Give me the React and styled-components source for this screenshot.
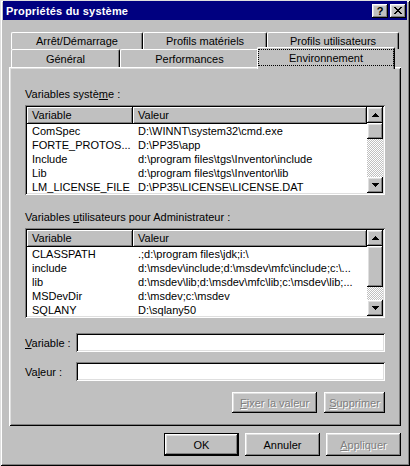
import React from 'react';
import styled, { createGlobalStyle, css } from 'styled-components';

const GlobalStyle = createGlobalStyle`
  * { box-sizing: border-box; }
  html, body { margin: 0; padding: 0; background: #c0c0c0; }
  body {
    font-family: "Liberation Sans", Arial, sans-serif;
    font-size: 11px;
    color: #000;
  }
`;

// classic 3D bevels
const raised = css`
  box-shadow: inset -1px -1px #000, inset 1px 1px #fff, inset -2px -2px #808080, inset 2px 2px #dfdfdf;
`;

const sunken = css`
  box-shadow: inset 1px 1px #808080, inset -1px -1px #fff, inset 2px 2px #000, inset -2px -2px #dfdfdf;
`;

const Window = styled.div`
  width: 410px;
  height: 466px;
  background: #c0c0c0;
  padding: 1px 3px 3px;
  display: flex;
  flex-direction: column;
  box-shadow: inset 1px 1px #dfdfdf, inset -1px -1px #000, inset 2px 2px #fff, inset -2px -2px #808080;
`;

const TitleBar = styled.div`
  height: 19px;
  flex-shrink: 0;
  background: #000080;
  color: #fff;
  display: flex;
  align-items: center;
  padding: 0 1px 0 3px;
`;

const TitleText = styled.div`
  flex: 1;
  font-weight: bold;
  font-size: 11px;
  letter-spacing: 0.2px;
`;

const CaptionButtons = styled.div`
  display: flex;
  gap: 2px;
`;

const CaptionButton = styled.div`
  width: 16px;
  height: 14px;
  background: #c0c0c0;
  color: #000;
  font-weight: bold;
  font-size: 11px;
  line-height: 14px;
  display: flex;
  align-items: center;
  justify-content: center;
  ${raised}
`;

const Body = styled.div`
  flex: 1;
  padding: 12px 6px 0;
  display: flex;
  flex-direction: column;
`;

const TabStrip = styled.div`
  display: flex;
  flex-direction: column;
  padding-left: 2px;
`;

const TabRow = styled.div`
  display: flex;
  align-items: flex-end;
  height: ${p => p.h}px;
`;

const Tab = styled.div`
  width: ${p => p.w}px;
  height: 100%;
  background: #c0c0c0;
  border-top: 1px solid #fff;
  border-left: 1px solid #fff;
  border-right: 1px solid #000;
  border-radius: 2px 2px 0 0;
  box-shadow: inset -1px 0 #808080;
  display: flex;
  align-items: center;
  justify-content: center;
  white-space: nowrap;

  ${p => p.active && css`
    height: 22px;
    margin: 0 -2px -2px;
    padding: 1px 0 3px;
    position: relative;
    z-index: 1;
  `}
`;

const Focus = styled.div`
  flex: 1;
  height: 100%;
  border: 1px dotted #000;
  display: flex;
  align-items: center;
  justify-content: center;
`;

const Panel = styled.div`
  height: 359px;
  flex-shrink: 0;
  padding: 21px 16px 0;
  display: flex;
  flex-direction: column;
  box-shadow: inset 1px 1px #fff, inset -1px -1px #000, inset 2px 2px #dfdfdf, inset -2px -2px #808080;
`;

const GroupLabel = styled.div`
  line-height: 13px;
  height: 13px;
  margin-top: ${p => p.top || 0}px;
  margin-bottom: 4px;
`;

const Key = styled.span`
  text-decoration: underline;
`;

const ListView = styled.div`
  height: 90px;
  flex-shrink: 0;
  background: #fff;
  padding: 2px;
  display: flex;
  overflow: hidden;
  ${sunken}
`;

const ListBody = styled.div`
  flex: 1;
  min-width: 0;
  display: flex;
  flex-direction: column;
  overflow: hidden;
`;

const HeaderRow = styled.div`
  display: flex;
  height: 17px;
  flex-shrink: 0;
`;

const HeaderCell = styled.div`
  ${p => (p.w ? `width: ${p.w}px;` : 'flex: 1;')}
  background: #c0c0c0;
  line-height: 16px;
  padding-left: 5px;
  box-shadow: inset -1px -1px #000, inset 1px 1px #fff, inset -2px -2px #808080;
`;

const Row = styled.div`
  display: flex;
  height: 14px;
  line-height: 14px;
  flex-shrink: 0;
  white-space: nowrap;
`;

const Cell = styled.div`
  ${p => (p.w ? `width: ${p.w}px;` : 'flex: 1;')}
  padding-left: 5px;
  overflow: hidden;
`;

const ScrollBar = styled.div`
  width: 16px;
  flex-shrink: 0;
  display: flex;
  flex-direction: column;
`;

const ScrollArrow = styled.div`
  height: 16px;
  flex-shrink: 0;
  background: #c0c0c0;
  display: flex;
  align-items: center;
  justify-content: center;
  ${raised}
`;

const Thumb = styled.div`
  height: ${p => p.h}px;
  flex-shrink: 0;
  background: #c0c0c0;
  ${raised}
`;

const Track = styled.div`
  flex: 1;
  background-color: #fff;
  background-image: repeating-conic-gradient(#c0c0c0 0% 25%, #fff 0% 50%);
  background-size: 2px 2px;
`;

const FieldRow = styled.div`
  display: flex;
  align-items: center;
  height: 19px;
  margin-top: ${p => p.top}px;
`;

const FieldLabel = styled.div`
  width: 51px;
  flex-shrink: 0;
`;

const Field = styled.div`
  flex: 1;
  height: 19px;
  background: #fff;
  ${sunken}
`;

const ButtonRow = styled.div`
  display: flex;
  justify-content: flex-end;
  gap: ${p => p.gap}px;
  margin-top: ${p => p.top}px;
`;

const Button = styled.div`
  width: ${p => p.w}px;
  height: ${p => p.h}px;
  background: #c0c0c0;
  display: flex;
  align-items: center;
  justify-content: center;
  white-space: nowrap;
  ${raised}

  ${p => p.disabled && css`
    color: #808080;
    text-shadow: 1px 1px #fff;
  `}

  ${p => p.primary && css`
    border: 1px solid #000;
  `}
`;

const pixelPath = rows =>
  rows
    .map((r, y) => {
      let d = '';
      let x = 0;
      while (x < r.length) {
        if (r[x] === '1') {
          let len = 0;
          while (r[x + len] === '1') len++;
          d += `M${x} ${y}h${len}v1h-${len}z`;
          x += len;
        } else x++;
      }
      return d;
    })
    .join('');

const CLOSE = ['11000011', '01100110', '00111100', '00011000', '00111100', '01100110', '11000011'];
const UP = ['0001000', '0011100', '0111110', '1111111'];
const DOWN = [...UP].reverse();

const Glyph = ({ rows, w, h }) => (
  <svg width={w} height={h} viewBox={`0 0 ${w} ${h}`} shapeRendering="crispEdges">
    <path d={pixelPath(rows)} fill="#000" />
  </svg>
);

const systemVars = [
  ['ComSpec', 'D:\\WINNT\\system32\\cmd.exe'],
  ['FORTE_PROTOS...', 'D:\\PP35\\app'],
  ['Include', 'd:\\program files\\tgs\\Inventor\\include'],
  ['Lib', 'd:\\program files\\tgs\\Inventor\\lib'],
  ['LM_LICENSE_FILE', 'D:\\PP35\\LICENSE\\LICENSE.DAT'],
];

const userVars = [
  ['CLASSPATH', '.;d:\\program files\\jdk;i:\\'],
  ['include', 'd:\\msdev\\include;d:\\msdev\\mfc\\include;c:\\...'],
  ['lib', 'd:\\msdev\\lib;d:\\msdev\\mfc\\lib;c:\\msdev\\lib;...'],
  ['MSDevDir', 'd:\\msdev;c:\\msdev'],
  ['SQLANY', 'D:\\sqlany50'],
];

const VarList = ({ rows, thumb }) => (
  <ListView>
    <ListBody>
      <HeaderRow>
        <HeaderCell w={106}>Variable</HeaderCell>
        <HeaderCell>Valeur</HeaderCell>
      </HeaderRow>
      {rows.map(([name, value]) => (
        <Row key={name}>
          <Cell w={106}>{name}</Cell>
          <Cell>{value}</Cell>
        </Row>
      ))}
    </ListBody>
    <ScrollBar>
      <ScrollArrow>
        <Glyph rows={UP} w={7} h={4} />
      </ScrollArrow>
      <Thumb h={thumb} />
      <Track />
      <ScrollArrow>
        <Glyph rows={DOWN} w={7} h={4} />
      </ScrollArrow>
    </ScrollBar>
  </ListView>
);

const App = () => (
  <>
    <GlobalStyle />
    <Window>
      <TitleBar>
        <TitleText>Propriétés du système</TitleText>
        <CaptionButtons>
          <CaptionButton>?</CaptionButton>
          <CaptionButton>
            <Glyph rows={CLOSE} w={8} h={7} />
          </CaptionButton>
        </CaptionButtons>
      </TitleBar>

      <Body>
        <TabStrip>
          <TabRow h={17}>
            <Tab w={132}>Arrêt/Démarrage</Tab>
            <Tab w={124}>Profils matériels</Tab>
            <Tab w={132}>Profils utilisateurs</Tab>
          </TabRow>
          <TabRow h={18}>
            <Tab w={109}>Général</Tab>
            <Tab w={139}>Performances</Tab>
            <Tab w={138} active>
              <Focus>Environnement</Focus>
            </Tab>
          </TabRow>
        </TabStrip>

        <Panel>
          <GroupLabel>
            Variables systè<Key>m</Key>e :
          </GroupLabel>
          <VarList rows={systemVars} thumb={16} />

          <GroupLabel top={16}>
            Variables <Key>u</Key>tilisateurs pour Administrateur :
          </GroupLabel>
          <VarList rows={userVars} thumb={41} />

          <FieldRow top={15}>
            <FieldLabel>
              <Key>V</Key>ariable :
            </FieldLabel>
            <Field />
          </FieldRow>
          <FieldRow top={10}>
            <FieldLabel>
              Va<Key>l</Key>eur :
            </FieldLabel>
            <Field />
          </FieldRow>

          <ButtonRow gap={7} top={11}>
            <Button w={85} h={21} disabled>
              <span><Key>F</Key>ixer la valeur</span>
            </Button>
            <Button w={61} h={21} disabled>
              <span><Key>S</Key>upprimer</span>
            </Button>
          </ButtonRow>
        </Panel>

        <ButtonRow gap={6} top={7}>
          <Button w={75} h={23} primary>OK</Button>
          <Button w={75} h={23}>Annuler</Button>
          <Button w={75} h={23} disabled>
            <span><Key>A</Key>ppliquer</span>
          </Button>
        </ButtonRow>
      </Body>
    </Window>
  </>
);

export default App;
